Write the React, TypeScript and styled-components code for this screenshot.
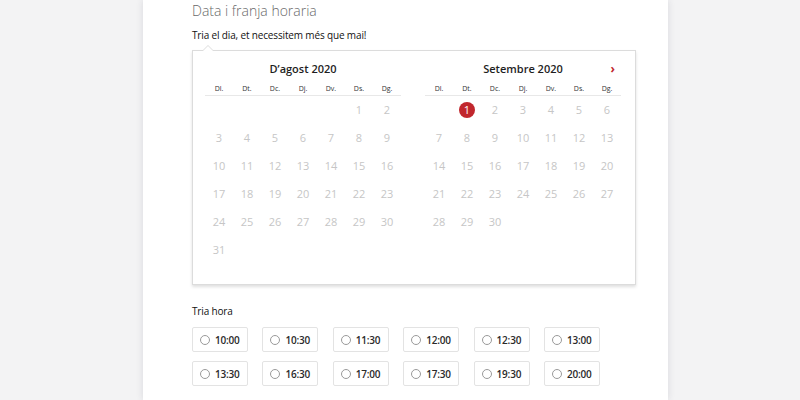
import { createGlobalStyle, styled } from 'styled-components';

const GlobalStyle = createGlobalStyle`
    body {
        margin: 0;
        background: #f3f3f4;
        font-family: 'Open Sans', 'Noto Sans', sans-serif;
    }
`;

const Page = styled.div`
    min-height: 100vh;
    padding-left: 143px;
    display: flex;
`;

const Panel = styled.div`
    width: 525px;
    min-height: 400px;
    box-sizing: border-box;
    background: #fff;
    box-shadow: 0 0 7px rgba(40, 40, 70, 0.13);
    padding: 2px 0 0 49px;
`;

const Title = styled.h2`
    margin: 0;
    font-size: 14px;
    font-weight: 300;
    line-height: 18px;
    color: #6a6a6a;
`;

const Label = styled.div<{ $top: number }>`
    margin-top: ${(p) => p.$top}px;
    font-size: 10px;
    font-weight: 500;
    letter-spacing: -0.15px;
    line-height: 14px;
    color: #111;
`;

const CalendarBox = styled.div`
    position: relative;
    margin-top: 8px;
    width: 444px;
    height: 235px;
    box-sizing: border-box;
    border: 1px solid #dcdcdc;
    box-shadow: 0 2px 3px rgba(0, 0, 0, 0.13);
    padding: 10px 13px 0 12px;
    display: flex;
    gap: 24px;

    &::before,
    &::after {
        content: '';
        position: absolute;
        left: 9px;
        border: 6px solid transparent;
        border-top: none;
    }
    &::before {
        top: -6px;
        border-bottom-color: #dcdcdc;
    }
    &::after {
        top: -5px;
        border-bottom-color: #fff;
    }
`;

const Month = styled.div`
    width: 196px;
`;

const MonthTitle = styled.div`
    position: relative;
    height: 16px;
    line-height: 16px;
    text-align: center;
    font-size: 11px;
    font-weight: 600;
    color: #1e1e1e;
`;

const NextArrow = styled.span`
    position: absolute;
    right: 6px;
    top: 0;
    font-size: 12px;
    font-weight: 700;
    color: #c1272d;
`;

const WeekHeader = styled.div`
    margin-top: 6px;
    display: grid;
    grid-template-columns: repeat(7, 28px);
    height: 12px;
    line-height: 12px;
    border-bottom: 1px solid #e8e8e8;
    font-size: 7px;
    color: #333;
    text-align: center;
`;

const DaysGrid = styled.div`
    display: grid;
    grid-template-columns: repeat(7, 28px);
    grid-auto-rows: 28px;
`;

const Day = styled.div<{ $selected?: boolean }>`
    display: flex;
    align-items: center;
    justify-content: center;
    padding-bottom: 1px;
    font-size: 11px;
    color: #c6c6c6;

    span {
        width: 16px;
        height: 16px;
        border-radius: 50%;
        display: flex;
        align-items: center;
        justify-content: center;
        background: ${(p) => (p.$selected ? '#c1272d' : 'transparent')};
        color: ${(p) => (p.$selected ? '#fff' : '#c6c6c6')};
    }
`;

const TimesGrid = styled.div`
    margin-top: 9px;
    display: grid;
    grid-template-columns: repeat(6, 56px);
    grid-auto-rows: 25px;
    column-gap: 14.4px;
    row-gap: 9px;
`;

const TimeButton = styled.label`
    box-sizing: border-box;
    border: 1px solid #e3e3e3;
    border-radius: 2px;
    display: flex;
    align-items: center;
    gap: 5px;
    padding-left: 7px;
    font-size: 10px;
    font-weight: 600;
    letter-spacing: -0.2px;
    color: #2a2a2a;
`;

const Radio = styled.span`
    width: 10px;
    height: 10px;
    box-sizing: border-box;
    border: 1px solid #9a9a9a;
    border-radius: 50%;
`;

const weekdays = ['Dl.', 'Dt.', 'Dc.', 'Dj.', 'Dv.', 'Ds.', 'Dg.'];
const times = ['10:00', '10:30', '11:30', '12:00', '12:30', '13:00', '13:30', '16:30', '17:00', '17:30', '19:30', '20:00'];

function MonthView({
    title,
    offset,
    days,
    selected,
    showNext,
}: {
    title: string;
    offset: number;
    days: number;
    selected?: number;
    showNext?: boolean;
}) {
    const cells: (number | null)[] = [];
    for (let i = 0; i < offset; i++) cells.push(null);
    for (let d = 1; d <= days; d++) cells.push(d);

    return (
        <Month>
            <MonthTitle>
                {title}
                {showNext && <NextArrow>›</NextArrow>}
            </MonthTitle>
            <WeekHeader>
                {weekdays.map((w) => (
                    <div key={w}>{w}</div>
                ))}
            </WeekHeader>
            <DaysGrid>
                {cells.map((d, i) => (
                    <Day key={i} $selected={d === selected}>
                        {d && <span>{d}</span>}
                    </Day>
                ))}
            </DaysGrid>
        </Month>
    );
}

export default function App() {
    return (
        <>
            <GlobalStyle />
            <Page>
                <Panel>
                    <Title>Data i franja horaria</Title>
                    <Label $top={8}>Tria el dia, et necessitem més que mai!</Label>
                    <CalendarBox>
                        <MonthView title="D’agost 2020" offset={5} days={31} />
                        <MonthView title="Setembre 2020" offset={1} days={30} selected={1} showNext />
                    </CalendarBox>
                    <Label $top={19}>Tria hora</Label>
                    <TimesGrid>
                        {times.map((t) => (
                            <TimeButton key={t}>
                                <Radio />
                                {t}
                            </TimeButton>
                        ))}
                    </TimesGrid>
                </Panel>
            </Page>
        </>
    );
}
